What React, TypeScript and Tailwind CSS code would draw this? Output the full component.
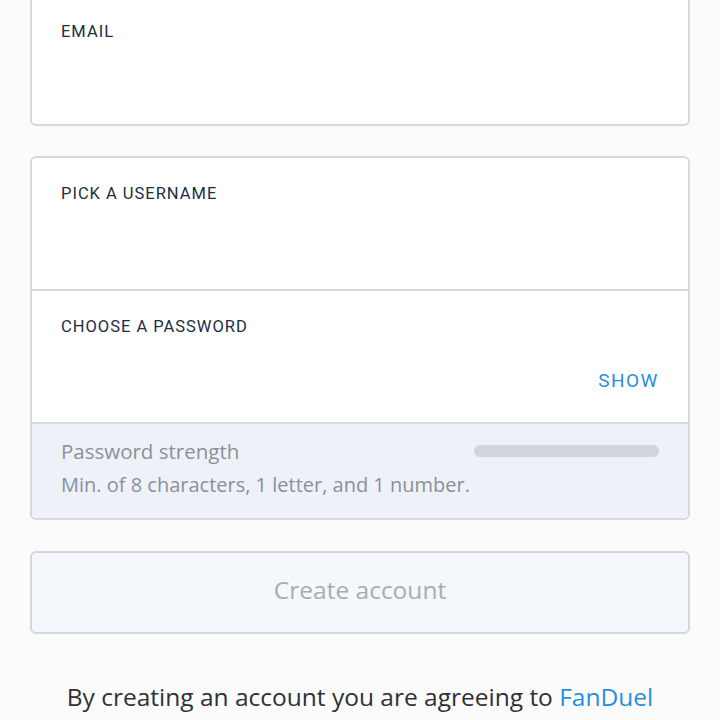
import type { ReactNode } from "react";

const LABEL =
  "font-['Roboto',sans-serif] text-[16.5px] leading-none tracking-[0.06em] uppercase text-[#1e2d45]";

function Field({ label, className, children }: { label: string; className: string; children?: ReactNode }) {
  return (
    <div className={`px-[29px] flex flex-col ${className}`}>
      <span className={LABEL}>{label}</span>
      {children}
    </div>
  );
}

export default function App() {
  return (
    <div className="min-h-screen bg-[#fbfbfb] font-['Open_Sans',sans-serif] overflow-hidden">
      <div className="-mt-[6px] px-[30px] flex flex-col">
        {/* Email */}
        <div className="rounded-md border-2 border-[#d6dae0] bg-white">
          <Field label="Email" className="h-[128px] pt-[28px]" />
        </div>

        {/* Username + password */}
        <div className="mt-[30px] rounded-md border-2 border-[#d6dae0] bg-white overflow-hidden">
          <Field label="Pick a username" className="h-[131px] pt-[28px]" />
          <Field label="Choose a password" className="h-[133px] pt-[28px] border-t-2 border-[#d6dae0]">
            <div className="mt-auto mb-[32px] flex justify-end">
              <button className="font-['Roboto',sans-serif] text-[19px] leading-none tracking-[0.08em] text-[#2a8ee0]">
                SHOW
              </button>
            </div>
          </Field>
          <div className="h-[96px] border-t-2 border-[#d6dae0] bg-[#eef2f8] px-[29px] pt-[14px]">
            <div className="flex items-center justify-between">
              <span className="text-[20.5px] leading-[26px] text-[#8b9098]">Password strength</span>
              <div className="w-[185px] h-[12px] rounded-full bg-[#d0d4db]" />
            </div>
            <p className="mt-[8px] text-[20px] leading-[26px] text-[#8b9098]">
              Min. of 8 characters, 1 letter, and 1 number.
            </p>
          </div>
        </div>

        {/* Submit */}
        <button className="mt-[31px] h-[83px] pb-[4px] rounded-md border-2 border-[#d3d7dd] bg-[#f4f7fb] text-[24.5px] text-[#a9adb2]">
          Create account
        </button>

        <p className="mt-[48px] text-center text-[24.5px] leading-[30px] whitespace-nowrap text-[#2d3237]">
          By creating an account you are agreeing to <span className="text-[#2a8ee0]">FanDuel</span>
        </p>
      </div>
    </div>
  );
}
